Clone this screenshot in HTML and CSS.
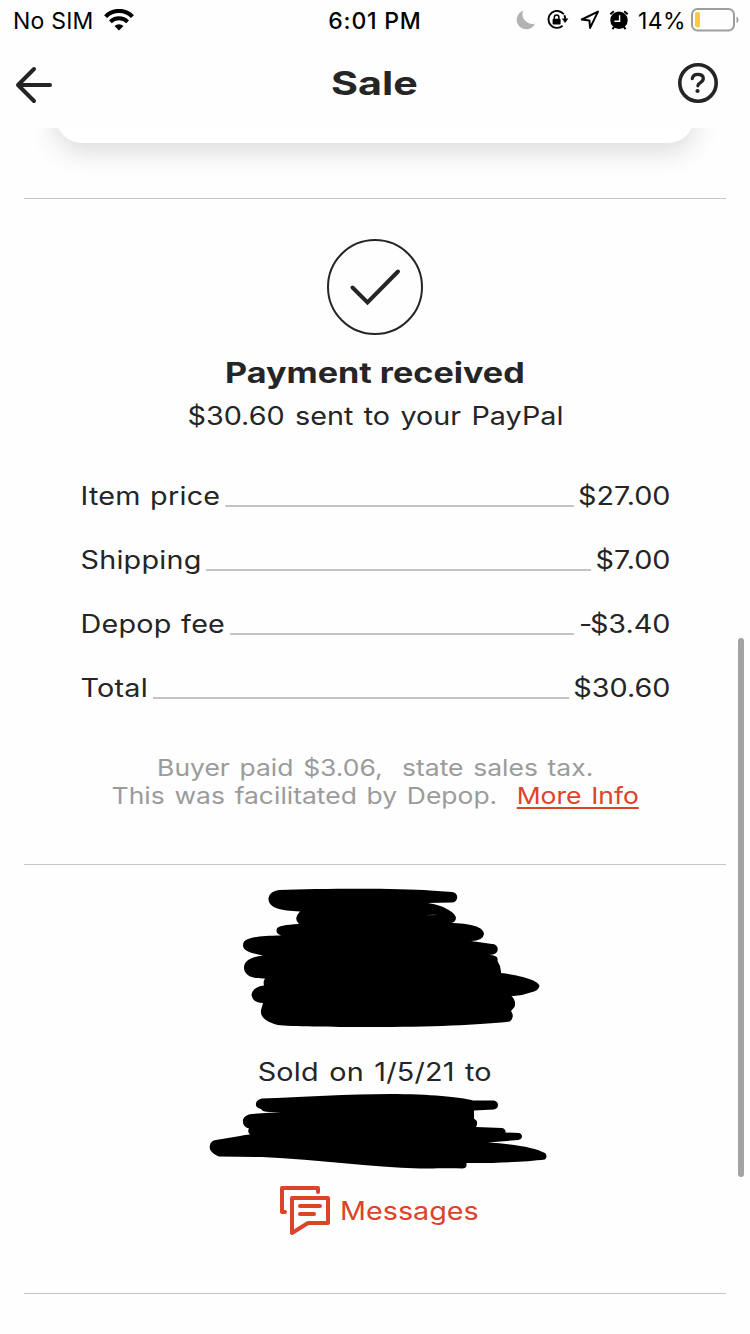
FILE: index.html
```
<!DOCTYPE html>
<html lang="en">
<head>
<meta charset="utf-8">
<title>Sale</title>
<link rel="stylesheet" href="styles.css">
</head>
<body>
<header class="status-bar">
  <div class="status-left">
    <span class="carrier">No SIM</span>
    <svg class="wifi" width="30" height="22" viewBox="0 0 30 22" fill="none" stroke="#000">
      <path d="M1.6 7.6A18.7 18.7 0 0 1 28.400 7.600" stroke-width="4.200"/>
      <path d="M6.400 12.900A12 12 0 0 1 23.600 12.900" stroke-width="3.800"/>
      <path d="M15 21.600l-4.500-4.500a6.200 6.200 0 0 1 9 0z" fill="#000" stroke="none"/>
    </svg>
  </div>
  <div class="clock">6:01 PM</div>
  <div class="status-right">
    <svg class="moon" width="20" height="20" viewBox="0 0 20 20"><path d="M7.200.8A9.500 9.500 0 1 0 19 13.400 9.600 9.600 0 0 1 7.200.8z" fill="#b3b3b3"/></svg>
    <svg class="lock" width="22" height="20" viewBox="0 0 22 20">
      <path d="M16.800 4.300A8.500 8.500 0 1 0 15.600 15.800M17.300 5.200q1 1.800 1 4" fill="none" stroke="#000" stroke-width="1.900"/>
      <path d="M14.800 8.500h6.600l-3.300 4.600z"/>
      <rect x="5.600" y="8.800" width="8" height="5.700" rx="1"/>
      <path d="M7.300 9V7.300a2.300 2.300 0 0 1 4.600 0V9" fill="none" stroke="#000" stroke-width="1.500"/>
    </svg>
    <svg class="locate" width="20" height="20" viewBox="0 0 20 20"><path d="M18 1.600L1.800 9.500l7.600.9.700 7.500z" fill="none" stroke="#000" stroke-width="2" stroke-linejoin="round"/></svg>
    <svg class="alarm" width="20" height="20" viewBox="0 0 20 20">
      <circle cx="10" cy="10.200" r="8.700"/>
      <path d="M1.300 4.300L4.800 1.200M18.700 4.300L15.200 1.200M3.400 19.200l2-2.500M16.600 19.200l-2-2.500" stroke="#000" stroke-width="2"/>
      <path d="M10.600 5.200v6H5.400" fill="none" stroke="#fff" stroke-width="1.400"/>
    </svg>
    <span class="percent">14%</span>
    <svg class="battery" width="48" height="24" viewBox="0 0 48 24">
      <rect x="1" y="1" width="42" height="21.500" rx="5.500" fill="none" stroke="#9d9d9d" stroke-width="2"/>
      <rect x="4" y="4" width="5" height="15.500" rx="2.200" fill="#f5cb3f"/>
      <path d="M45.500 8.500q2 .8 2 3.300t-2 3.300z" fill="#9d9d9d"/>
    </svg>
  </div>
</header>

<nav class="nav-bar">
  <svg class="back" width="40" height="40" viewBox="0 0 40 40" fill="none" stroke="#252525" stroke-width="4" stroke-linecap="round" stroke-linejoin="round"><path d="M20 4L4 20l16 16M4 20h32"/></svg>
  <h1 class="nav-title">Sale</h1>
  <svg width="40" height="40" viewBox="0 0 40 40" fill="none" stroke="#252525"><circle cx="20" cy="20" r="18.200" stroke-width="3.600"/><path d="M14.300 15.600c.4-3 2.600-4.200 5.400-4.200 3.200 0 5.600 1.400 5.600 4.200 0 2.400-1.600 3.200-3.200 4.200-1.500.9-2.200 1.500-2.200 3" stroke-width="3.300" stroke-linecap="round"/><circle cx="19.500" cy="28" r="2.100" fill="#252525" stroke="none"/></svg>
</nav>

<main class="content">
  <div class="card-window"><div class="card"></div></div>

  <section class="payment">
    <svg class="check" width="96" height="96" viewBox="0 0 96 96" fill="none" stroke="#252525"><circle cx="48" cy="48" r="47" stroke-width="2"/><path d="M25.500 48.500l15 15L71 32.500" stroke-width="4" stroke-linecap="round"/></svg>
    <h2 class="pay-title">Payment received</h2>
    <p class="pay-sub">$30.60 sent to your PayPal</p>
    <dl class="fees">
      <div class="fee"><dt>Item price</dt><dd>$27.00</dd></div>
      <div class="fee"><dt>Shipping</dt><dd>$7.00</dd></div>
      <div class="fee"><dt>Depop fee</dt><dd><span class="minus">-</span>$3.40</dd></div>
      <div class="fee"><dt>Total</dt><dd>$30.60</dd></div>
    </dl>
    <div class="tax-note">
      <p>Buyer paid $3.06,&nbsp; state sales tax.</p>
      <p>This was facilitated by Depop.&nbsp; <a class="more">More Info</a></p>
    </div>
  </section>

  <section class="buyer">
    <svg class="scribble-a" width="300" height="140" viewBox="243 888 300 140"><path d="M279 890C320 888.500 400 888 430 890.500L452 892a5 5 0 0 1 0 10.500L427 903C440 904 456 912 456 918q-.5 5-6 5C470 923 484 927 484 934q-1 7-13 7L492 944a5 5 0 0 1 1 10.500L489 955q10 0 8.500 6q4 6 3.500 12C518 975 539 980 539.500 986q-1 5-9 6.500C524 995 516 996 511.500 996q5 5 3 11l-3.500 4q4 6-1 10.500C480 1025 430 1027 370 1027C330 1027 290 1026.500 278 1025C266 1022 260 1017 261 1010l2-7q-10 0-11.500-8q1-8 12.500-9.500q-1-4 1-7C252 979 244 975 244 968C244 960 252 957 263 955.500C250 953 243 951 243 945C243 937 258 936 281 935.500q-6-2-4-7q1-3.500 22-4.500q-6-5 1-12.500C280 911 268 908 268.500 898Q270 891 279 890z"/><path d="M425 915.300q7-1 13-.3z" fill="#bbb"/></svg>
    <p class="sold">Sold on 1/5/21 to</p>
    <svg class="scribble-b" width="338" height="76" viewBox="209 1093 338 76"><path d="M262 1098.500C300 1097 350 1094 390 1094C430 1094 460 1097 473 1100.500L494 1100.500q4 1 4 4.500t-4 4.500L474 1110.500v8q5 3 2 8.500L502 1128q4 1 3.500 4.500L519 1133q3 1 3 3.500t-4 3.500L488 1142.500Q530 1145 545 1153q3 3 0 6.500C525 1162 490 1163.500 466.500 1163v3q-1 2.500-4 2.500C450 1168 440 1168.500 420 1168.500C370 1167 320 1160 262 1157L219 1156.500q-6-2-9-7c-1-5 1-9 6-9.500l24-4q5-1.500 10-1.500q-3-3-1-6q-7-2-6-9q2-5 9-5.500L281 1112H270Q262 1112 261 1109q-6-1-5-6q1-3.500 6-4.500z"/></svg>
    <div class="messages">
      <svg width="52" height="52" viewBox="0 0 52 52" fill="none" stroke="#dd4328" stroke-width="4" stroke-linecap="round" stroke-linejoin="round"><path d="M6 27H3V3h36v4"/><path d="M13 13h36v25H29L13 48z"/><path d="M21 21h20M21 29h14"/></svg>
      <span class="messages-label">Messages</span>
    </div>
  </section>
</main>
<div class="scroll-thumb"></div>
</body>
</html>
```
FILE: styles.css
```
* { box-sizing: border-box; }
body {
  margin: 0;
  width: 750px;
  height: 1334px;
  overflow: hidden;
  position: relative;
  background: #fefefe;
  color: #252525;
  font-family: Inter, "Liberation Sans", sans-serif;
}
h1, h2, p, dl, dd { margin: 0; }
svg { display: block; flex: none; }

.status-bar {
  display: grid;
  grid-template-columns: 1fr auto 1fr;
  height: 40px;
  align-items: center;
  color: #000;
  font-size: 23px;
  line-height: 38px;
  white-space: nowrap;
}
.carrier, .clock, .percent { padding-top: 2px; }
.carrier { letter-spacing: 0.2px; }
.status-left { display: flex; align-items: center; padding-left: 13px; gap: 10px; }
.clock { font-weight: 500; letter-spacing: 0.8px; }
.status-right { display: flex; align-items: center; justify-content: flex-end; padding-right: 11px; }
.moon { margin-right: 11px; }
.lock { margin-right: 11px; }
.locate { margin-right: 9px; }
.alarm { margin-right: 9px; }
.percent { margin-right: 5px; letter-spacing: 0.4px; }

.nav-bar {
  display: grid;
  grid-template-columns: 40px 1fr 40px;
  align-items: center;
  height: 88px;
  padding: 0 32px 2px 14px;
}
.back { margin-top: 4px; }
.nav-title {
  justify-self: center;
  font-size: 33px;
  line-height: 40px;
  font-weight: 700;
  transform: scaleX(1.25);
  padding-left: 14px;
}

.card-window { height: 70px; overflow: hidden; }
.card {
  height: 100px;
  margin: -85px 56px 0;
  border-radius: 26px;
  background: #fff;
  box-shadow: 0 8px 28px rgba(0, 0, 0, 0.15);
}

.payment, .buyer {
  display: flex;
  flex-direction: column;
  align-items: center;
  margin: 0 24px;
  border-top: 1px solid #c7c7c7;
  white-space: nowrap;
}
.payment { height: 666px; padding-top: 40px; }
.pay-title {
  margin-top: 18px;
  font-size: 28px;
  line-height: 40px;
  font-weight: 700;
  transform: scaleX(1.22);
}
.pay-sub, .sold { font-size: 25px; line-height: 40px; word-spacing: 2px; transform: scaleX(1.15); }
.pay-sub { margin-top: 3px; }

.fees {
  width: 513px;
  margin-top: 28px;
  font-size: 25px;
  transform: scaleX(1.15);
}
.fee { display: flex; height: 64px; line-height: 64px; }
.fee::before {
  content: "";
  order: 1;
  flex: 1;
  height: 2px;
  margin: 41px 4px 0;
  background: #c4c4c4;
}
.fee dt { letter-spacing: 0.2px; word-spacing: 1px; }
.fee dd { order: 2; }
.minus { margin-right: -2px; }

.tax-note {
  margin-top: 34px;
  font-size: 23px;
  line-height: 28px;
  word-spacing: 2px;
  text-align: center;
  color: #9b9b9b;
  transform: scaleX(1.15);
}
.more { color: #dd4328; text-decoration: underline; text-decoration-thickness: 2px; text-underline-offset: 3px; }

.buyer { height: 430px; border-bottom: 1px solid #c7c7c7; padding-top: 23px; }
.scribble-a { margin-left: 35px; }
.sold { margin-top: 24px; letter-spacing: 0.15px; }
.scribble-b { margin-top: 1px; margin-left: 6px; }
.messages { display: flex; align-items: center; gap: 9px; margin-top: 16px; padding-right: 10px; color: #dd4328; }
.messages-label { font-size: 25px; transform: scaleX(1.15); transform-origin: left; }

.scroll-thumb {
  position: absolute;
  top: 638px;
  left: 738px;
  width: 6px;
  height: 539px;
  border-radius: 3px;
  background: #a3a3a3;
}
```
